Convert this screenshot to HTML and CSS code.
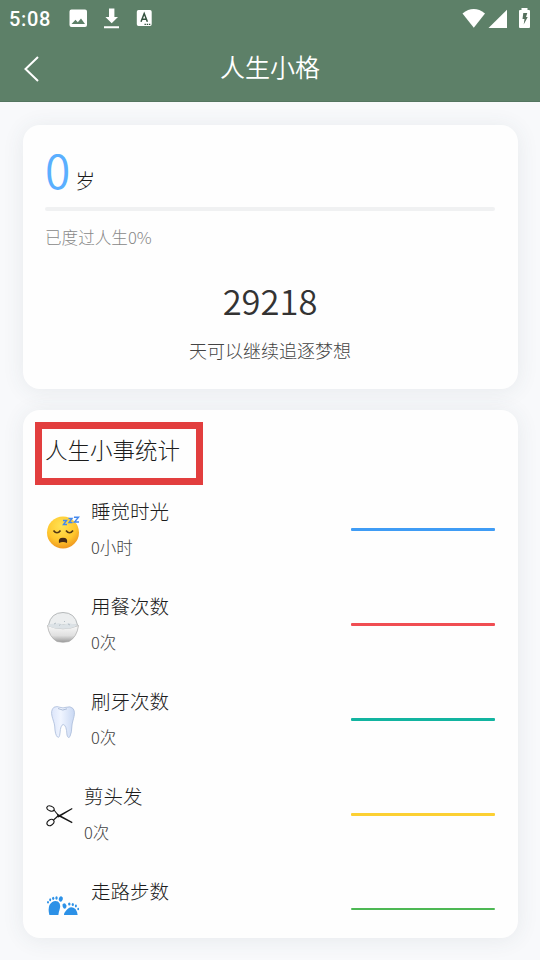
FILE: index.html
```html
<!DOCTYPE html>
<html lang="zh-CN">
<head>
<meta charset="utf-8">
<title>人生小格</title>
<link rel="stylesheet" href="styles.css">
</head>
<body>
<header class="top">
  <div class="status">
    <span class="clock">5:08</span>
    <svg class="status-left" width="84" height="24" viewBox="69 6 84 24" fill="#fff">
      <path fill-rule="evenodd" d="M71.500 9.500h13.500q2 0 2 2v13.500q0 2-2 2h-13.500q-2 0-2-2v-13.500q0-2 2-2zM71.500 24h13.500l-4-5.500-3.200 3.800-2.300-2.500z"/>
      <path d="M109 8.500h5.400v8.500h3.600l-6.300 6.300-6.300-6.300h3.600zM104 26.300h15v2h-15z"/>
      <path d="M138.500 10h11.500q1.700 0 1.700 1.700v12.500q0 1.700-1.700 1.700h-11.500q-1.700 0-1.700-1.700v-12.500q0-1.700 1.700-1.700z"/>
      <path d="M141 21.800l3.200-8.300 3.200 8.300M142.200 19.200h4" fill="none" stroke="#35523f" stroke-width="1.500"/>
      <path d="M144.500 24.300h6" stroke="#35523f" stroke-width="1.200" stroke-dasharray="1.400 .8"/>
    </svg>
    <svg class="status-right" width="70" height="24" viewBox="462 5 70 24" fill="#fff">
      <path d="M462.500 12.500q11.300-8.800 22.500 0l-11.200 14.200z"/>
      <path d="M507 8.800v18.200h-18.500z"/>
      <path d="M521.500 7h6v2h1.500q1 0 1 1v16q0 1-1 1h-9q-1 0-1-1v-16q0-1 1-1h1.500z"/>
      <path d="M523.300 12h4l-1.300 4h1.700l-4 7.500 .8-5.500h-2z" fill="#56705e"/>
    </svg>
  </div>
  <div class="navbar">
    <svg class="back" width="18" height="28" viewBox="0 0 18 28"><path d="M16 2L3.500 14l12.500 12" fill="none" stroke="#fff" stroke-width="2"/></svg>
    <h1>人生小格</h1>
  </div>
</header>
<main>
  <section class="card age-card">
    <div class="age"><span class="age-number">0</span><span class="age-unit">岁</span></div>
    <div class="progress"></div>
    <div class="passed">已度过人生0%</div>
    <div class="days">29218</div>
    <div class="days-label">天可以继续追逐梦想</div>
  </section>
  <section class="card stats-card">
    <h2>人生小事统计</h2>
    <div class="list">
      <div class="row">
        <svg class="icon" viewBox="0 0 34 34">
          <defs><radialGradient id="face" cx=".45" cy=".3" r=".7"><stop offset="0" stop-color="#ffe354"/><stop offset=".65" stop-color="#ffc72e"/><stop offset="1" stop-color="#ef9820"/></radialGradient></defs>
          <circle cx="17" cy="17.500" r="16" fill="url(#face)"/>
          <path d="M7.500 15.500q3.500 4.500 7 0M20 15.500q3.500 4.500 7 0" fill="none" stroke="#533813" stroke-width="1.700"/>
          <path d="M13 28q-1.200-5.200 4-5.200t4 5.200q-4-2-8 0z" fill="#452b17"/>
          <path d="M17 5.500h3.500l-3 4h3.500M22.500 3.500h3.500l-3 4h3.500M28 2.300h4.500l-4 4.700h4.500" fill="none" stroke="#4388ee" stroke-width="1.400"/>
        </svg>
        <div class="copy"><div class="name">睡觉时光</div><div class="value">0小时</div></div>
        <div class="line blue"></div>
      </div>
      <div class="row">
        <svg class="icon" viewBox="0 0 34 34">
          <defs><linearGradient id="bowl" x2="0" y2="1"><stop offset="0" stop-color="#f9f9f9"/><stop offset=".6" stop-color="#e0e0e0"/><stop offset="1" stop-color="#9a9a9a"/></linearGradient></defs>
          <path d="M2.500 15Q5 2.500 17 2.500T31.500 15z" fill="#eceeef" stroke="#a5a8aa" stroke-width=".8"/>
          <path d="M1.500 15.500Q17 22 32.500 15.500Q31 27 23 31.500q-6 1.500-12 0Q3 27 1.500 15.500z" fill="url(#bowl)" stroke="#a7a7a7" stroke-width=".7"/>
          <path d="M1.500 15q4-2 8-1l3-1 5 2 5-2 4 1 5 .5q-2 4-14.500 4.300Q4.500 18.500 1.500 15z" fill="#dce2e6"/>
          <path d="M8 14l2-1M13 15.500l1.500-1M22 14l2 1M18 11l1 1" stroke="#aeb8c0" stroke-width=".9"/>
        </svg>
        <div class="copy"><div class="name">用餐次数</div><div class="value">0次</div></div>
        <div class="line red"></div>
      </div>
      <div class="row">
        <svg class="icon" viewBox="0 0 34 34">
          <defs><linearGradient id="tooth"><stop offset="0" stop-color="#dce5fa"/><stop offset=".4" stop-color="#f0f5ff"/><stop offset="1" stop-color="#c9d8f3"/></linearGradient></defs>
          <path d="M8 2.200Q11 1 14 2.300Q17 3.500 20 2.300Q24.500 .8 27 3.500C30.500 8 26.500 15 26 20Q25.700 28 24 31.500Q22 34 21 30Q20.500 20 17.200 19.500Q14.500 20 14 28Q13.500 33.500 11.500 32Q9 30 8.700 21C8 15 2.500 7 8 2.200z" fill="url(#tooth)" stroke="#aabbd9" stroke-width=".8"/>
          <path d="M12 3.500q5 3 9 .3" fill="none" stroke="#a6b7d3" stroke-width=".9"/>
        </svg>
        <div class="copy"><div class="name">刷牙次数</div><div class="value">0次</div></div>
        <div class="line teal"></div>
      </div>
      <div class="row">
        <svg class="icon scissors" viewBox="0 0 27 34">
          <g fill="none" stroke="#171717" stroke-width="1.100"><ellipse cx="4.500" cy="8.500" rx="3.800" ry="2.500" transform="rotate(20 4.500 8.500)"/><ellipse cx="4.500" cy="22.500" rx="3.800" ry="2.700" transform="rotate(-35 4.500 22.500)"/><path d="M8 10l4 5M7.500 20l4.500-4"/></g>
          <path d="M10.500 16.500L26 8l.5 1-14 8.500zM11 13.500L26.500 22l-.5 1.200L11 15.500z" fill="#151515"/>
        </svg>
        <div class="copy"><div class="name">剪头发</div><div class="value">0次</div></div>
        <div class="line yellow"></div>
      </div>
      <div class="row">
        <svg class="icon" viewBox="0 0 34 34" fill="#2c91e7">
          <path d="M3.500 10Q7 4.500 12 6.500Q15.500 9 13.500 15Q11.500 20 13 26Q13 32 8 31Q3 29 4 22Q1.500 15 3.500 10zM19 17Q24 9.500 29.500 14Q33 19 31 27Q29 34 24 32Q21 30 22 24Q16 21 19 17z"/>
          <ellipse cx="14.800" cy="4" rx="2" ry="2.700" transform="rotate(20 14.800 4)"/><ellipse cx="10.500" cy="3" rx="1.200" ry="1.800"/><ellipse cx="7.200" cy="3.300" rx="1.100" ry="1.600"/><ellipse cx="4.200" cy="4.800" rx="1" ry="1.500"/><ellipse cx="2" cy="7.300" rx=".9" ry="1.300"/>
          <ellipse cx="18.500" cy="11" rx="1.900" ry="2.700" transform="rotate(-20 18.500 11)"/><ellipse cx="23.300" cy="9" rx="1.200" ry="1.600"/><ellipse cx="26.800" cy="9.400" rx="1.100" ry="1.500"/><ellipse cx="29.900" cy="11" rx="1" ry="1.400"/><ellipse cx="32.200" cy="14" rx=".9" ry="1.300"/>
        </svg>
        <div class="copy"><div class="name">走路步数</div></div>
        <div class="line green"></div>
      </div>
    </div>
    <div class="highlight"></div>
  </section>
</main>
</body>
</html>
```
FILE: styles.css
```css
* { box-sizing: border-box; }
body {
  margin: 0;
  height: 960px;
  overflow: hidden;
  background: #f8f9fb;
  color: #1c1c1c;
  font-family: "Noto Sans CJK SC", sans-serif;
  font-weight: 300;
}
h1, h2 { margin: 0; font-weight: inherit; }
.top { height: 102px; background: #5d8068; color: #fff; border-bottom: 1px solid #547560; }
.status { height: 36px; display: flex; align-items: center; padding: 0 8px 0 9px; }
.clock { width: 60px; font: 500 20px/24px Roboto, sans-serif; letter-spacing: .7px; padding-top: 1px; }
.status-right { margin-left: auto; }
.navbar { height: 65px; display: grid; grid-template-columns: 60px 1fr 60px; align-items: center; }
.back { margin-left: 22px; }
.navbar h1 { font-size: 25px; font-weight: 350; line-height: 36px; text-align: center; padding-bottom: 5px; }
main { padding: 23px 22px 0 23px; display: grid; gap: 21px; }
.card { background: #fefefe; border-radius: 17px; box-shadow: 0 2px 22px rgba(60, 75, 90, .09); padding: 0 23px 0 22px; }
.age-card { height: 264px; padding-top: 14px; }
.age { height: 68px; display: flex; align-items: baseline; line-height: 60px; }
.age-number { color: #5aafff; font-size: 46px; font-weight: 350; }
.age-unit { font-size: 20px; margin-left: 5px; }
.progress { height: 4px; background: #f0f1f2; border-radius: 2px; }
.passed { color: #888; font-size: 16.6px; line-height: 24px; margin-top: 14px; }
.days { font-size: 34.5px; font-weight: 350; line-height: 50px; text-align: center; margin-top: 26px; color: #333; }
.days-label { font-size: 18px; line-height: 26px; text-align: center; margin-top: 12px; color: #444; }
.stats-card { position: relative; height: 528px; padding-top: 22px; }
.stats-card h2 { font-size: 22.5px; line-height: 34px; height: 50px; }
.list { height: 433px; overflow: hidden; }
.row { height: 95px; display: flex; align-items: center; }
.icon { width: 34px; height: 34px; flex: none; margin: 4px -1px 0 1px; }
.scissors { width: 27px; }
.copy { margin-left: 12px; flex: 1; height: 68px; }
.name { font-size: 19.5px; line-height: 30px; }
.value { font-size: 16.5px; line-height: 24px; margin-top: 9px; color: #444; }
.line { width: 144px; height: 3px; border-radius: 1px; }
.blue { background: #3f9cf5; }
.red { background: #f04d52; }
.teal { background: #12b4a0; }
.yellow { background: #fcd033; }
.green { background: #4db854; height: 2px; margin-bottom: 2px; }
.highlight { position: absolute; left: 12px; top: 12px; width: 168px; height: 63px; border: 7px solid #e23e3e; }
```
